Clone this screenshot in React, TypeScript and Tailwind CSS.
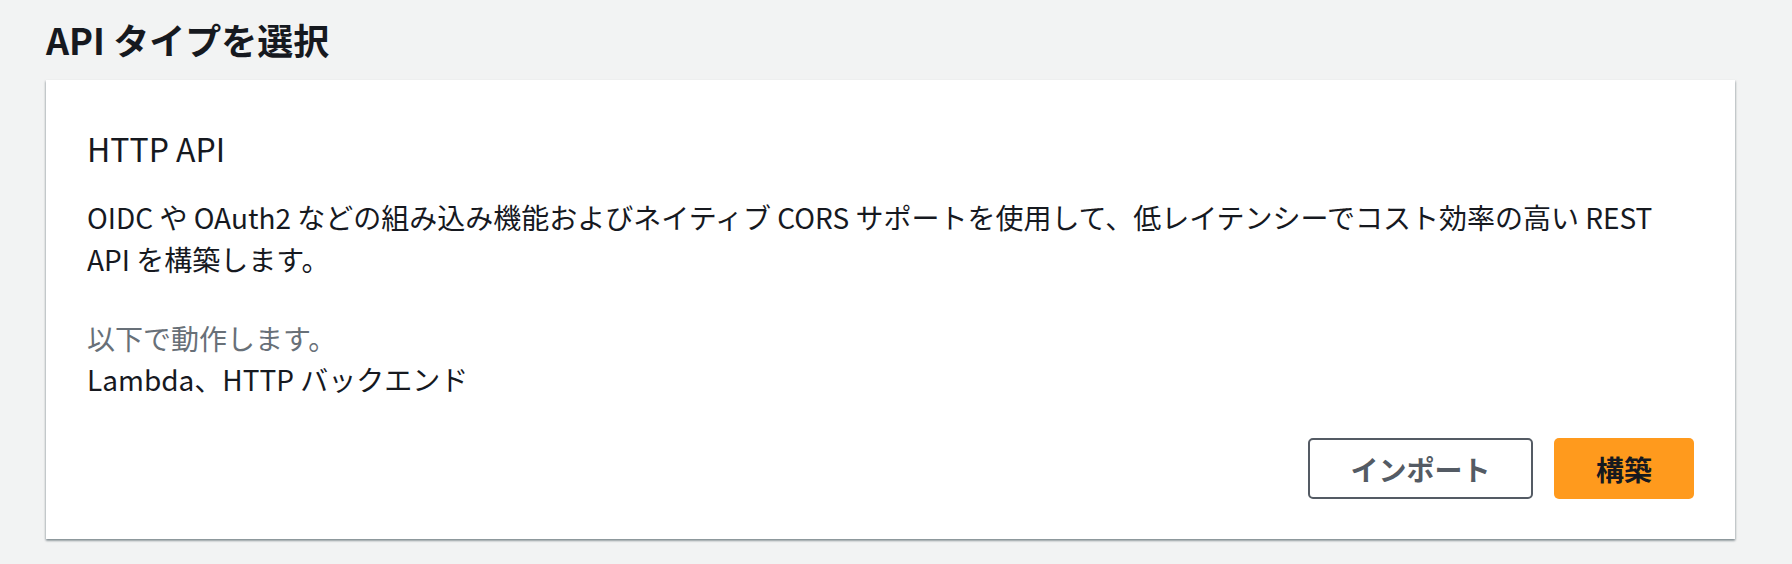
export default function App() {
  const font = { fontFamily: '"Noto Sans CJK JP", "Noto Sans", sans-serif' };
  return (
    <div className="min-h-[564px] w-full bg-[#f2f3f3] text-[#16191f]" style={font}>
      <div className="pl-[46px] pr-[57px] pt-[16px]">
        <h1 className="h-[46px] text-[36px] leading-[46px] font-bold">API タイプを選択</h1>

        <div className="mt-[18px] flex flex-col bg-white px-[41px] pt-[48px] pb-[40px] shadow-[0_2px_2px_0_rgba(0,28,36,0.3),1px_1px_2px_0_rgba(0,28,36,0.15),-1px_1px_2px_0_rgba(0,28,36,0.15)]">
          <h2 className="text-[32px] leading-[40px] font-normal">HTTP API</h2>

          <p className="mt-[28px] text-[28px] leading-[42px]">
            OIDC や OAuth2 などの組み込み機能およびネイティブ CORS サポートを使用して、低レイテンシーでコスト効率の高い REST API を構築します。
          </p>

          <div className="mt-[38px] text-[28px] leading-[41px]">
            <div className="text-[#687078]">以下で動作します。</div>
            <div>Lambda、HTTP バックエンド</div>
          </div>

          <div className="mt-[38px] flex justify-end gap-[21px]">
            <button className="h-[61px] w-[225px] rounded-[5px] border-2 border-[#545b64] bg-white text-[28px] font-bold text-[#545b64]">
              インポート
            </button>
            <button className="h-[61px] w-[140px] rounded-[5px] bg-[#ff9a1d] text-[28px] font-bold text-[#16191f]">
              構築
            </button>
          </div>
        </div>
      </div>
    </div>
  );
}
